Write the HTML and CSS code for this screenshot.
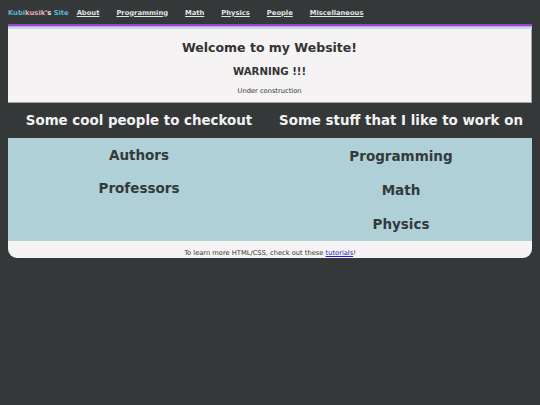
FILE: index.html
```html
<!DOCTYPE html>
<html>
<head>
<meta charset="utf-8">
<link rel="stylesheet" href="styles.css">
</head>
<body>
<nav class="nav">
  <span class="logo"><span class="blue">Kubi</span><span class="pink">kusik</span><span class="white">'s</span> <span class="blue">Site</span></span>
  <a href="#">About</a>
  <a href="#">Programming</a>
  <a href="#">Math</a>
  <a href="#">Physics</a>
  <a href="#">People</a>
  <a href="#">Miscellaneous</a>
</nav>
<main class="page">
  <section class="card">
    <div class="strip"></div>
    <h1>Welcome to my Website!</h1>
    <h2>WARNING !!!</h2>
    <p>Under construction</p>
  </section>
  <div class="heads">
    <h3>Some cool people to checkout</h3>
    <h3>Some stuff that I like to work on</h3>
  </div>
  <div class="panel">
    <div class="col">
      <div class="item">Authors</div>
      <div class="item">Professors</div>
    </div>
    <div class="col right">
      <div class="item">Programming</div>
      <div class="item">Math</div>
      <div class="item">Physics</div>
    </div>
  </div>
  <footer class="foot">To learn more HTML/CSS, check out these <a href="#">tutorials</a>!</footer>
</main>
</body>
</html>
```
FILE: styles.css
```css
html, body {
  margin: 0;
  padding: 0;
  background: #353839;
  font-family: "DejaVu Sans", Verdana, sans-serif;
  color: #333333;
}
.nav {
  height: 25px;
  display: flex;
  align-items: center;
  padding-left: 8px;
  gap: 17px;
  font-size: 6.75px;
  font-weight: bold;
  margin-bottom: -1px;
}
.logo .blue { color: #5db3d4; }
.logo .pink { color: #e6a8b8; }
.logo .white { color: #e8e8e8; }
.logo { margin-right: -9px; }
.nav a {
  color: #e4e4e4;
  text-decoration: underline;
}
.page {
  margin: 0 8px;
}
.card {
  background: #f5f3f4;
  text-align: center;
  padding: 0 0 6px;
  border-right: 1px solid #a4a4a4;
  border-bottom: 1px solid #a4a4a4;
}
.strip {
  height: 5px;
  margin-right: -1px;
  background: linear-gradient(to bottom, #9c48cc 0, #9c48cc 2px, #c2a8e4 2px, #c2a8e4 3px, #c6d6ee 3px, #c6d6ee 5px);
}
.card h1 {
  margin: 11px 0 0;
  font-size: 12.5px;
  line-height: 16px;
}
.card h2 {
  margin: 9px 0 0;
  font-size: 10.2px;
  line-height: 14px;
}
.card p {
  margin: 7px 0 0;
  font-size: 6.7px;
  line-height: 10px;
}
.heads {
  display: grid;
  grid-template-columns: 1fr 1fr;
  padding: 9px 0 8px;
}
.heads h3 {
  margin: 0;
  text-align: center;
  color: #f2f2f2;
  font-size: 13.4px;
  line-height: 18px;
  white-space: nowrap;
}
.panel {
  background: #afd0d7;
  display: grid;
  grid-template-columns: 1fr 1fr;
  padding: 8px 0 8px;
}
.col {
  display: flex;
  flex-direction: column;
  align-items: center;
  gap: 15px;
}
.col.right {
  padding-top: 1px;
  gap: 16px;
}
.item {
  font-size: 13.5px;
  font-weight: bold;
  line-height: 18px;
  color: #333a3c;
}
.foot {
  background: #f5f3f4;
  border-radius: 0 0 9px 9px;
  text-align: center;
  font-size: 6.7px;
  line-height: 10px;
  padding: 7px 0 0;
  height: 10px;
}
.foot a { color: #2222cc; }
```
